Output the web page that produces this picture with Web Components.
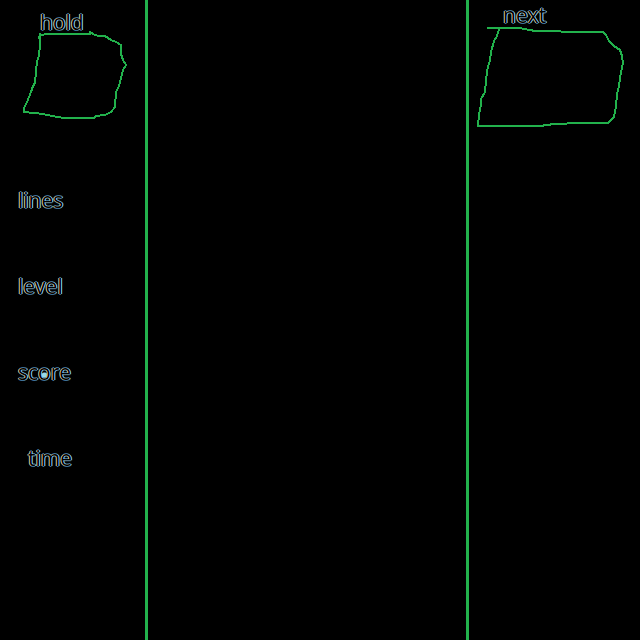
<!DOCTYPE html>
<html lang="en">
<head>
<meta charset="utf-8">
<title>Block game layout</title>
<style>
html, body { margin: 0; min-height: 100%; background: #000; }
</style>
</head>
<body>
<game-board></game-board>
<script>
class OutlineLabel extends HTMLElement {
  constructor() {
    super();
    this.attachShadow({ mode: "open" }).innerHTML = `
      <style>
        :host { display: block; width: max-content; font: 21px/18px "Open Sans", "Noto Sans", sans-serif;
          color: #000; text-shadow: -1px 0 #d8cba0, 1px 0 #8fd4ff, 0 -1px #3f7096, 0 1px #3f7096; }
      </style>
      <slot></slot>`;
  }
}
customElements.define("outline-label", OutlineLabel);

class PieceSlot extends HTMLElement {
  constructor() {
    super();
    this.attachShadow({ mode: "open" }).innerHTML = `
      <style>
        :host { display: block; }
        ::slotted(svg) { display: block; fill: none; stroke: #22b14c; stroke-width: 2; shape-rendering: crispEdges; }
        .name { padding-left: var(--name-indent, 0); }
      </style>
      <div class="name"><outline-label><slot name="label"></slot></outline-label></div>
      <slot></slot>`;
  }
}
customElements.define("piece-slot", PieceSlot);

class GameStats extends HTMLElement {
  constructor() {
    super();
    this.attachShadow({ mode: "open" }).innerHTML = `
      <style>
        :host { display: flex; flex-direction: column; gap: 68px; padding-left: 18px; }
        .time { padding-left: 10px; }
        .dot { background: radial-gradient(circle at 50% 18px, #99d9ea 3px, transparent 4px); }
      </style>
      <outline-label>lines</outline-label>
      <outline-label>level</outline-label>
      <outline-label>sc<span class="dot">o</span>re</outline-label>
      <outline-label class="time">time</outline-label>`;
  }
}
customElements.define("game-stats", GameStats);

class GameBoard extends HTMLElement {
  constructor() {
    super();
    this.attachShadow({ mode: "open" }).innerHTML = `
      <style>
        :host { display: grid; grid-template-columns: 148px 1fr 174px; min-height: 100vh; background: #000; }
        aside { box-sizing: border-box; }
        .left { border-right: 3px solid #22b14c; padding-top: 13px; }
        .right { border-left: 3px solid #22b14c; padding-top: 6px; }
        .left svg { margin-left: 22px; }
        .right svg { margin-left: 7px; }
        .hold { --name-indent: 40px; }
        .next { --name-indent: 34px; }
        game-stats { margin-top: 70px; }
      </style>
      <aside class="left">
        <piece-slot class="hold">
          <span slot="label">hold</span>
          <svg width="106" height="90" viewBox="22 31 106 90" role="img" aria-label="Held piece">
            <path d="M39 39L40 33V35L48 34H90L90 32L93 34L98 36H105L111 40L116 42L121 45V54L123 60L126 65L123 70L121 78L119 86L116 92L115 107L111 112L105 115L96 116L94 118H64L58 117L52 116L43 114L34 113L24 112V108L27 102L31 92L33 86L35 83L36 71L37 62L39 55L40 46V35"/>
          </svg>
        </piece-slot>
        <game-stats></game-stats>
      </aside>
      <main></main>
      <aside class="right">
        <piece-slot class="next">
          <span slot="label">next</span>
          <svg width="150" height="104" viewBox="476 24 150 104" role="img" aria-label="Next piece">
            <path d="M487 28H519L530 30L535 31H560L562 32H603L606 35L609 41L614 46L620 50L622 56L623 63L621 72L619 86L617 94L616 106L614 117L608 123H568L566 124L554 124L540 126H478L479 115L481 104V99L485 92L486 80L488 66L490 61L491 52L494 41L497 36L499 29"/>
          </svg>
        </piece-slot>
      </aside>`;
  }
}
customElements.define("game-board", GameBoard);
</script>
</body>
</html>
